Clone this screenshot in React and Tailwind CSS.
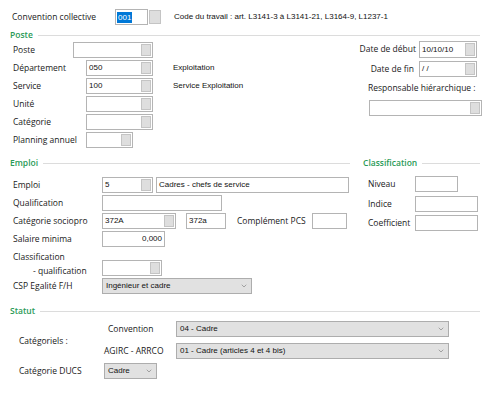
import React from "react";
import { ChevronDown } from "lucide-react";

// champ texte simple
const Field = ({ w, value = "", right = false, className = "" }) => (
  <div
    className={`h-[16px] border border-[#b4b4b4] bg-white flex items-center px-[2px] font-['Liberation_Sans',Arial,sans-serif] text-[8px] text-[#111] ${
      right ? "justify-end" : ""
    } ${w} ${className}`}
  >
    {value}
  </div>
);

// champ avec bouton de recherche
const FieldBtn = ({ w, value = "", className = "" }) => (
  <div
    className={`h-[16px] border border-[#b4b4b4] bg-white flex items-stretch font-['Liberation_Sans',Arial,sans-serif] text-[8px] text-[#111] ${w} ${className}`}
  >
    <div className="flex-1 flex items-center px-[2px]">{value}</div>
    <div className="w-[10px] my-[1px] mr-[1px] bg-[#dedede] border border-[#c4c4c4]"></div>
  </div>
);

const Select = ({ w, value, className = "" }) => (
  <div
    className={`h-[16px] border border-[#adadad] bg-[#e1e1e1] flex items-center justify-between pl-[3px] pr-[3px] font-['Liberation_Sans',Arial,sans-serif] text-[8px] text-[#111] ${w} ${className}`}
  >
    <span>{value}</span>
    <ChevronDown size={8} strokeWidth={1.5} className="text-[#606060]" />
  </div>
);

const SectionTitle = ({ title, className = "" }) => (
  <div className={`flex items-center h-[12px] ${className}`}>
    <span className="font-semibold text-[#2a9a57]">{title}</span>
    <div className="flex-1 h-px bg-[#dcdcdc] ml-[5px]"></div>
  </div>
);

const App = () => {
  return (
    <div className="w-[490px] h-[395px] bg-white overflow-hidden pt-[9px] font-['Open_Sans','Noto_Sans',sans-serif] text-[8.5px] text-[#1a1a1a] leading-none">
      {/* Convention collective */}
      <div className="flex items-center h-[16px]">
        <div className="w-[115px] pl-[12px]">Convention collective</div>
        <div className="w-[33px] h-[16px] border border-[#b4b4b4] flex items-center px-[1px] font-['Liberation_Sans',Arial,sans-serif] text-[8px]">
          <span className="bg-[#0078d7] text-white px-[1px] leading-[11px]">001</span>
        </div>
        <div className="w-[12px] h-[14px] ml-px bg-[#dedede] border border-[#c4c4c4]"></div>
        <div className="ml-[13px] font-['Liberation_Sans',Arial,sans-serif] text-[8px] text-[#111]">
          Code du travail : art. L3141-3 à L3141-21, L3164-9, L1237-1
        </div>
      </div>

      {/* Poste */}
      <SectionTitle title="Poste" className="mt-[4px] pl-[10px] pr-[10px]" />
      <div className="flex justify-between pr-[8px]">
        <div className="flex flex-col gap-[2px] pl-[13px] pt-[1px]">
          <div className="flex items-center h-[16px]">
            <div className="w-[60px]">Poste</div>
            <FieldBtn w="w-[80px]" />
          </div>
          <div className="flex items-center h-[16px]">
            <div className="w-[73px]">Département</div>
            <FieldBtn w="w-[67px]" value="050" />
            <div className="ml-[20px] font-['Liberation_Sans',Arial,sans-serif] text-[8px] text-[#111]">
              Exploitation
            </div>
          </div>
          <div className="flex items-center h-[16px]">
            <div className="w-[73px]">Service</div>
            <FieldBtn w="w-[67px]" value="100" />
            <div className="ml-[20px] font-['Liberation_Sans',Arial,sans-serif] text-[8px] text-[#111]">
              Service Exploitation
            </div>
          </div>
          <div className="flex items-center h-[16px]">
            <div className="w-[73px]">Unité</div>
            <FieldBtn w="w-[67px]" />
          </div>
          <div className="flex items-center h-[16px]">
            <div className="w-[73px]">Catégorie</div>
            <FieldBtn w="w-[67px]" />
          </div>
          <div className="flex items-center h-[16px]">
            <div className="w-[73px]">Planning annuel</div>
            <FieldBtn w="w-[47px]" />
          </div>
        </div>

        <div className="w-[136px] flex flex-col">
          <div className="flex items-center justify-end h-[17px] pr-[5px]">
            <div className="mr-[3px]">Date de début</div>
            <FieldBtn w="w-[58px]" value="10/10/10" className="h-[17px]" />
          </div>
          <div className="flex items-center justify-end h-[16px] mt-[3px] pr-[5px]">
            <div className="mr-[5px]">Date de fin</div>
            <FieldBtn w="w-[58px]" value=" / /" />
          </div>
          <div className="mt-[7px] pl-[22px]">Responsable hiérarchique :</div>
          <FieldBtn w="w-[113px]" className="ml-[23px] mt-[7px]" />
        </div>
      </div>

      {/* Emploi / Classification */}
      <div className="flex mt-[9px]">
        <div className="w-[350px]">
          <SectionTitle title="Emploi" className="pl-[10px]" />
          <div className="flex flex-col gap-[2px] pl-[13px] mt-[8px]">
            <div className="flex items-center h-[16px]">
              <div className="w-[89px]">Emploi</div>
              <FieldBtn w="w-[51px]" value="5" />
              <Field w="w-[193px]" value="Cadres - chefs de service" className="ml-[3px]" />
            </div>
            <div className="flex items-center h-[16px]">
              <div className="w-[89px]">Qualification</div>
              <Field w="w-[120px]" />
            </div>
            <div className="flex items-center h-[16px]">
              <div className="w-[89px]">Catégorie sociopro</div>
              <FieldBtn w="w-[74px]" value="372A" />
              <Field w="w-[40px]" value="372a" className="ml-[10px]" />
              <div className="ml-[11px] w-[75px]">Complément PCS</div>
              <Field w="w-[35px]" />
            </div>
            <div className="flex items-center h-[16px]">
              <div className="w-[89px]">Salaire minima</div>
              <Field w="w-[63px]" value="0,000" right />
            </div>
            <div className="flex items-end h-[27px]">
              <div className="w-[89px] flex flex-col gap-[5px] pb-[1px]">
                <span>Classification</span>
                <span className="pl-[20px]">- qualification</span>
              </div>
              <FieldBtn w="w-[60px]" />
            </div>
            <div className="flex items-center h-[16px]">
              <div className="w-[89px]">CSP Egalité F/H</div>
              <Select w="w-[150px]" value="Ingénieur et cadre" />
            </div>
          </div>
        </div>

        <div className="flex-1 pl-[13px] pr-[10px]">
          <SectionTitle title="Classification" />
          <div className="flex flex-col pl-[5px] mt-[8px]">
            <div className="flex items-center h-[14px]">
              <div className="w-[47px]">Niveau</div>
              <Field w="w-[43px]" className="h-[14px]" />
            </div>
            <div className="flex items-center h-[16px] mt-[5px]">
              <div className="w-[47px]">Indice</div>
              <Field w="w-[63px]" />
            </div>
            <div className="flex items-center h-[16px] mt-[3px]">
              <div className="w-[47px]">Coefficient</div>
              <Field w="w-[63px]" />
            </div>
          </div>
        </div>
      </div>

      {/* Statut */}
      <SectionTitle title="Statut" className="mt-[11px] pl-[10px] pr-[10px]" />
      <div className="flex mt-[4px]">
        <div className="w-[104px] pl-[19px] self-center pt-[3px]">Catégoriels :</div>
        <div className="flex flex-col gap-[6px]">
          <div className="flex items-center h-[16px]">
            <div className="w-[72px] pl-[4px]">Convention</div>
            <Select w="w-[273px]" value="04 - Cadre" />
          </div>
          <div className="flex items-center h-[16px]">
            <div className="w-[72px]">AGIRC - ARRCO</div>
            <Select w="w-[273px]" value="01 - Cadre (articles 4 et 4 bis)" />
          </div>
        </div>
      </div>
      <div className="flex items-center h-[16px] mt-[4px]">
        <div className="w-[104px] pl-[19px]">Catégorie DUCS</div>
        <Select w="w-[53px]" value="Cadre" />
      </div>
    </div>
  );
};

export default App;
